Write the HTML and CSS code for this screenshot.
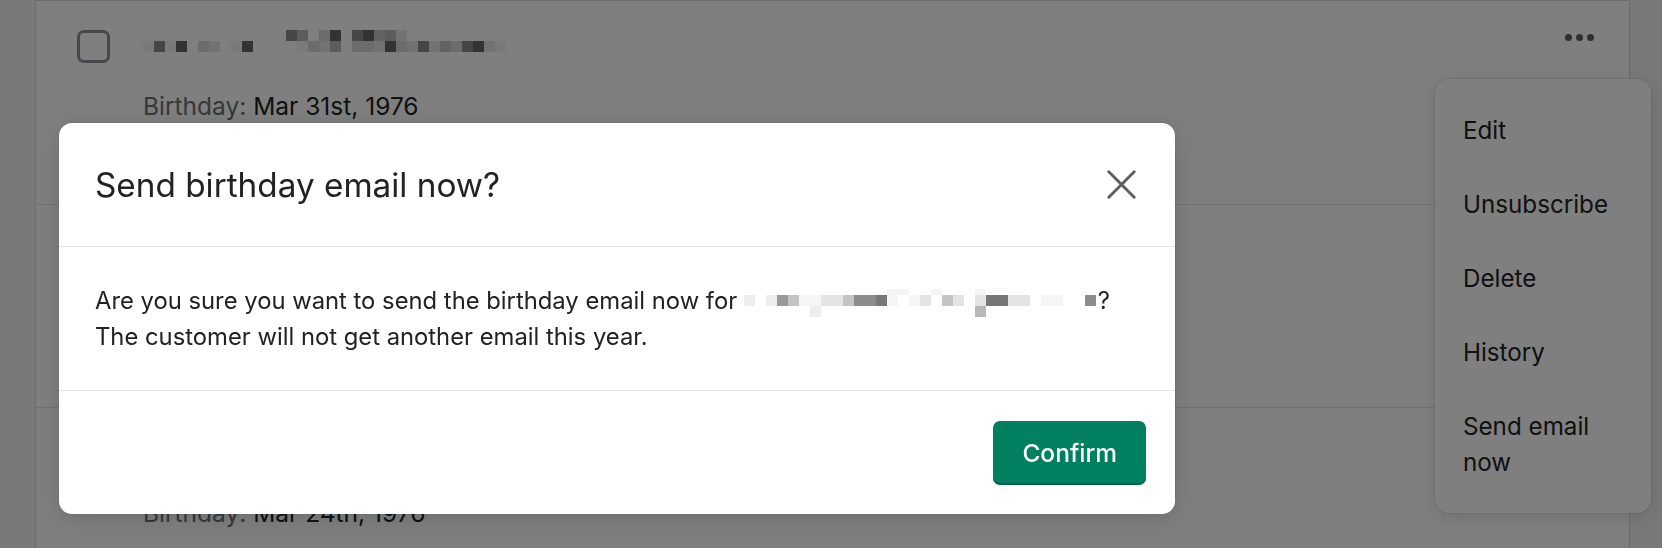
FILE: index.html
```html
<!DOCTYPE html>
<html lang="en">
<head>
<meta charset="utf-8">
<title>Send birthday email</title>
<link rel="stylesheet" href="styles.css">
</head>
<body>
<div class="page">
  <div class="card">
    <div class="row row-first">
      <span class="checkbox"></span>
      <div class="info">
        <div class="px name">
          <div class="px-row"><span></span><span></span><span></span><span></span><span></span><span></span><span></span><span></span><span></span><span></span><span></span><span></span><span></span><span class="s3"></span><span class="s5"></span><span></span><span class="s7"></span><span class="s1"></span><span></span><span class="s3"></span><span class="s1"></span><span class="s6"></span><span class="s5"></span><span class="s8"></span></div>
          <div class="px-row"><span class="s10"></span><span class="s3"></span><span class="s10"></span><span class="s1"></span><span></span><span class="s7"></span><span class="s8"></span><span></span><span class="s10"></span><span class="s1"></span><span></span><span></span><span></span><span></span><span class="s10"></span><span class="s7"></span><span class="s8"></span><span class="s5"></span><span></span><span class="s7"></span><span class="s7"></span><span class="s8"></span><span class="s1"></span><span class="s7"></span><span class="s8"></span><span class="s3"></span><span class="s8"></span><span class="s6"></span><span class="s7"></span><span class="s3"></span><span class="s1"></span><span class="s8"></span><span class="s10"></span></div>
        </div>
        <div class="meta"><span class="label">Birthday:</span> Mar 31st, 1976</div>
      </div>
      <span class="more"><span></span><span></span><span></span></span>
    </div>
    <div class="row">
      <span class="checkbox"></span>
      <div class="info">
        <div class="px name">
          <div class="px-row"><span></span><span></span><span></span><span></span><span></span><span></span><span></span><span></span><span></span><span></span><span></span><span class="s3"></span><span class="s5"></span><span></span><span class="s1"></span><span class="s6"></span></div>
          <div class="px-row"><span class="s8"></span><span class="s3"></span><span class="s7"></span><span class="s1"></span><span class="s8"></span><span></span><span class="s7"></span><span class="s1"></span><span class="s10"></span><span></span><span></span><span class="s8"></span><span class="s7"></span><span class="s3"></span><span class="s6"></span><span class="s1"></span><span class="s8"></span><span class="s7"></span></div>
        </div>
        <div class="meta"><span class="label">Birthday:</span> Mar 28th, 1976</div>
      </div>
      <span class="more"><span></span><span></span><span></span></span>
    </div>
    <div class="row">
      <span class="checkbox"></span>
      <div class="info">
        <div class="px name">
          <div class="px-row"><span></span><span></span><span></span><span></span><span></span><span></span><span></span><span></span><span></span><span></span><span class="s5"></span><span class="s1"></span><span></span><span class="s3"></span></div>
          <div class="px-row"><span class="s7"></span><span class="s1"></span><span class="s8"></span><span class="s3"></span><span></span><span class="s7"></span><span class="s1"></span><span></span><span></span><span class="s6"></span><span class="s8"></span><span class="s3"></span><span class="s1"></span><span class="s7"></span><span class="s10"></span></div>
        </div>
        <div class="meta"><span class="label">Birthday:</span> Mar 24th, 1976</div>
      </div>
      <span class="more"><span></span><span></span><span></span></span>
    </div>
    <ul class="menu">
      <li>Edit</li>
      <li>Unsubscribe</li>
      <li>Delete</li>
      <li>History</li>
      <li>Send email now</li>
    </ul>
  </div>
</div>
<div class="backdrop"></div>
<div class="modal" role="dialog" aria-labelledby="modal-title">
  <div class="modal-header">
    <h2 class="modal-title" id="modal-title">Send birthday email now?</h2>
    <button class="close" aria-label="Close">
      <svg width="29" height="29" viewBox="0 0 29 29" aria-hidden="true"><path d="M1.8 1.8 L27.2 27.2 M27.2 1.8 L1.8 27.2" fill="none" stroke="#5c5f62" stroke-width="2.9" stroke-linecap="round"/></svg>
    </button>
  </div>
  <div class="modal-body">
    <p>Are you sure you want to send the birthday email now for <span class="email"><span class="px-row top"><span></span><span></span><span></span><span></span><span></span><span></span><span></span><span></span><span></span><span></span><span></span><span></span><span></span><span class="s10"></span><span class="s10"></span><span></span><span></span><span class="s10"></span><span></span><span></span><span></span><span class="s10"></span></span><span class="px-row"><span class="s9"></span><span></span><span class="s9"></span><span class="s4"></span><span class="s6"></span><span class="s10"></span><span class="s10"></span><span class="s8"></span><span class="s8"></span><span class="s6"></span><span class="s3"></span><span class="s3"></span><span class="s2"></span><span class="s10"></span><span></span><span class="s10"></span><span class="s8"></span><span></span><span class="s6"></span><span class="s8"></span><span></span><span class="s8"></span><span class="s2"></span><span class="s2"></span><span class="s8"></span><span class="s8"></span><span></span><span class="s10"></span><span class="s10"></span><span></span><span></span><span class="s3"></span></span><span class="px-row"><span></span><span></span><span></span><span></span><span></span><span></span><span class="s9"></span><span></span><span></span><span></span><span></span><span></span><span></span><span></span><span></span><span></span><span></span><span></span><span></span><span></span><span></span><span class="s5"></span></span></span>?<br>The customer will not get another email this year.</p>
  </div>
  <div class="modal-footer">
    <button class="btn-primary">Confirm</button>
  </div>
</div>
</body>
</html>
```

FILE: styles.css
```css
* { box-sizing: border-box; }

html, body {
  margin: 0;
  height: 100%;
}

body {
  background: #f1f2f3;
  font-family: "Inter", "Noto Sans", "Liberation Sans", sans-serif;
  color: #202223;
  overflow: hidden;
}

.page {
  padding-left: 35px;
}

.card {
  position: relative;
  width: 1595px;
  background: #ffffff;
  border: 1px solid #d6d8da;
}

.row {
  display: flex;
  align-items: flex-start;
  height: 203px;
  padding: 29px 0 0 41px;
  border-bottom: 1px solid #e1e3e5;
}

.row-first {
  height: 204px;
}

.checkbox {
  flex: none;
  width: 33px;
  height: 33px;
  border: 3px solid #8c9196;
  border-radius: 7px;
  background: #fff;
}

.info {
  margin-left: 33px;
  flex: 1;
}

.px {
  display: flex;
  flex-direction: column;
}

.px-row {
  display: flex;
  height: 11px;
}

.px-row > span {
  flex: none;
  width: 11px;
  height: 100%;
}

.s1 { background: #666666; }
.s2 { background: #777777; }
.s3 { background: #8c8c8c; }
.s4 { background: #999999; }
.s5 { background: #b8b8b8; }
.s6 { background: #c4c4c4; }
.s7 { background: #d8d8d8; }
.s8 { background: #e4e4e4; }
.s9 { background: #eeeeee; }
.s10 { background: #f5f5f5; }

.meta {
  margin-top: 36px;
  font-size: 24.5px;
  line-height: 36px;
  color: #202223;
}

.label {
  color: #6d7175;
}

.more {
  flex: none;
  display: flex;
  gap: 4px;
  margin: 4px 35px 0 auto;
}

.more > span {
  width: 7px;
  height: 7px;
  border-radius: 50%;
  background: #5c5f62;
}

.menu {
  position: absolute;
  left: 1399px;
  top: 78px;
  width: 216px;
  margin: 0;
  padding: 15px 0 13px;
  list-style: none;
  background: #ffffff;
  border-radius: 14px;
  box-shadow: 0 0 0 1px rgba(6, 44, 82, 0.08), 0 4px 20px rgba(33, 43, 54, 0.15);
}

.menu li {
  padding: 19px 28px;
  font-size: 24.2px;
  line-height: 36px;
  color: #202223;
}

.backdrop {
  position: fixed;
  inset: 0;
  background: rgba(0, 0, 0, 0.5);
}

.modal {
  position: fixed;
  left: 59px;
  top: 123px;
  width: 1116px;
  background: #ffffff;
  border-radius: 13px;
  box-shadow: 0 0 0 1px rgba(6, 44, 82, 0.05), 0 4px 24px rgba(0, 0, 0, 0.15);
  display: flex;
  flex-direction: column;
}

.modal-header {
  display: flex;
  align-items: center;
  justify-content: space-between;
  height: 124px;
  padding: 0 39px 0 36px;
  border-bottom: 1px solid #e1e3e5;
}

.modal-title {
  margin: 0;
  font-size: 33.3px;
  line-height: 42px;
  font-weight: 400;
  color: #202223;
}

.close {
  display: flex;
  padding: 0;
  border: 0;
  background: none;
}

.modal-body {
  padding: 36px 37px 35px 36px;
  border-bottom: 1px solid #e1e3e5;
}

.modal-body p {
  margin: 0;
  font-size: 23.8px;
  line-height: 36px;
  color: #202223;
}

.email {
  display: inline-block;
  overflow: hidden;
  vertical-align: -8px;
  margin-right: 2px;
}

.email .px-row.top {
  height: 6px;
}

.modal-footer {
  display: flex;
  justify-content: flex-end;
  padding: 30px 29px 29px;
}

.btn-primary {
  height: 64px;
  padding: 0 29px;
  border: 0;
  border-radius: 7px;
  background: #008060;
  color: #ffffff;
  font-family: inherit;
  font-size: 24.5px;
  font-weight: 500;
  box-shadow: inset 0 -2px 0 rgba(0, 0, 0, 0.22), 0 1px 0 rgba(0, 0, 0, 0.05);
}
```
